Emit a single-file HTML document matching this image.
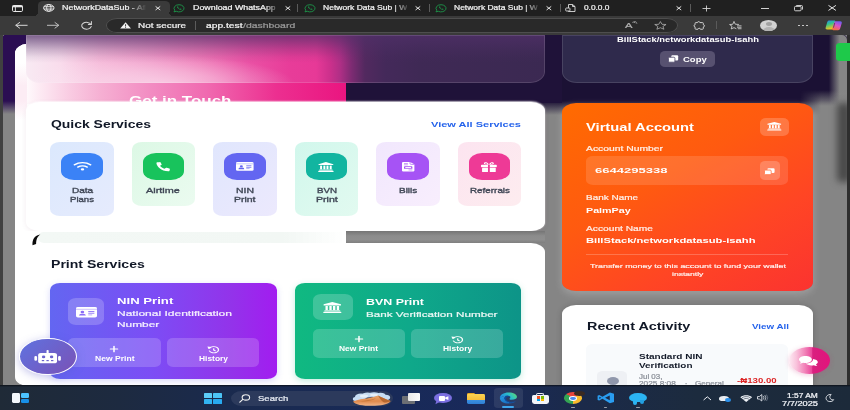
<!DOCTYPE html>
<html lang="en"><head><meta charset="utf-8"><title>NetworkDataSub - Dashboard</title>
<style>
html,body{margin:0;padding:0}
body{width:850px;height:410px;overflow:hidden;position:relative;background:#858585;font-family:"Liberation Sans", "DejaVu Sans", sans-serif;}
.b{position:absolute;box-sizing:border-box}
.t{position:absolute;white-space:nowrap;transform-origin:0 50%;margin:0}
.t.r{-webkit-text-stroke:.22px currentColor}
svg{position:absolute;overflow:visible}
</style></head>
<body>
<div class="b " style="left:3px;top:34.5px;width:844px;height:81.5px;background:linear-gradient(to bottom,#1b1134 0,#1b1134 66px,#858585 80px);border-radius:3px 4px 0 0"></div>
<div class="b " style="left:814px;top:34.5px;width:33px;height:81.5px;background:linear-gradient(to right,rgba(133,133,133,0) 0,rgba(133,133,133,0) 45%,#858585 78%);border-radius:0 5px 0 0"></div>
<div class="b " style="left:800px;top:90px;width:47px;height:26px;background:linear-gradient(to bottom,rgba(133,133,133,0) 0,#858585 62%);-webkit-mask-image:linear-gradient(to right,transparent 0,#000 45%);mask-image:linear-gradient(to right,transparent 0,#000 45%)"></div>
<div class="b " style="left:3px;top:34.5px;width:13px;height:81.5px;background:linear-gradient(to bottom,#2b0e52 0,#2b0e52 66px,#858585 79px);border-radius:3px 0 0 0"></div>
<div class="b " style="left:3px;top:34.5px;width:25px;height:17.5px;background:#2b0e52;border-radius:3px 0 0 0"></div>
<div class="b " style="left:0px;top:34px;width:3px;height:352px;background:#404040"></div>
<div class="b " style="left:847px;top:34px;width:3px;height:352px;background:#2e2e2e"></div>
<div class="b " style="left:837px;top:103px;width:14px;height:79px;background:#4a4a4a;filter:blur(3.6px);border-radius:4px"></div>
<div class="b " style="left:847px;top:34px;width:3px;height:352px;background:#2e2e2e"></div>
<div class="b " style="left:835.5px;top:42.5px;width:15.5px;height:18.5px;background:#1ec94a;border-radius:4px 0 0 4px / 3px 0 0 3px"></div>
<div class="b " style="left:15px;top:43.5px;width:330.5px;height:342.5px;background:#fff;border-radius:12px 0 0 13px / 10px 0 0 9px"></div>
<div class="b " style="left:15px;top:43.5px;width:330.5px;height:60.5px;background:linear-gradient(to right,#ffffff 0,#ffffff 2%,#fdeaf3 7.5%,#f9cbe2 16.6%,#f6b0d3 25.7%,#f28cc2 40.8%,#f06ab0 57.8%,#ec2f90 79%,#ea1580 100%);border-radius:12px 0 0 0 / 10px 0 0 0"></div>
<div class="b " style="left:15px;top:43.5px;width:12px;height:76.5px;background:linear-gradient(to bottom,#fff 0,#fff 25%,#fcecf4 55%,#fcecf4 75%,#fff 100%);border-radius:12px 0 0 0 / 10px 0 0 0"></div>
<div class="b " style="left:345.5px;top:34.5px;width:216.5px;height:68.5px;background:#1f1239"></div>
<div class="t" style="left:129px;top:94px;font-size:12.5px;line-height:15.0px;font-weight:700;color:#fff;transform:scaleX(1.3582);">Get in Touch</div>
<div class="b " style="left:26px;top:34.5px;width:519px;height:48.0px;background:linear-gradient(to bottom,rgba(80,48,104,.74) 0,rgba(80,48,104,.54) 13%,rgba(80,48,104,.28) 30%,rgba(80,48,104,.08) 46%,rgba(80,48,104,0) 58%),radial-gradient(ellipse 135px 30px at 135px 50px,rgba(255,240,248,.62) 0,rgba(255,240,248,.4) 45%,rgba(255,240,248,0) 100%),linear-gradient(to right,#f8eaf3 0.0%,#f9dcec 6.6%,#f5b8d8 14.3%,#f09ac8 23.9%,#ee78b6 33.5%,#ea50a4 43.2%,#e83c99 50.9%,#e73997 55.9%,#cc308c 58.6%,#b02f86 60.5%,#7c2b72 62.8%,#52295f 65.3%,#44295a 69.2%,#3f2955 75.9%,#3b2952 100.0%);border-radius:0 0 15px 15px / 0 0 11px 11px;box-shadow:inset 0 0 0 1px rgba(255,255,255,.13)"></div>
<div class="b " style="left:562px;top:34.5px;width:251px;height:48.0px;background:#2f2a4c;border-radius:0 0 15px 15px / 0 0 11px 11px;box-shadow:inset 0 0 0 1px rgba(255,255,255,.12)"></div>
<div class="t" style="left:616.5px;top:36px;font-size:7px;line-height:8.4px;font-weight:700;color:#fff;transform:scaleX(1.3420);">BillStack/networkdatasub-isahh</div>
<div class="b " style="left:660px;top:50.5px;width:55px;height:16.5px;background:#575170;border-radius:5px / 4px"></div>
<div class="t" style="left:683px;top:56px;font-size:7px;line-height:8.4px;font-weight:700;color:#fff;transform:scaleX(1.3543);">Copy</div>
<div class="b " style="left:26px;top:102.2px;width:519px;height:128.8px;background:#fff;border-radius:14px / 9px;box-shadow:0 -.6px 1.6px rgba(255,255,255,.75),0 1px 5px rgba(120,60,100,.10)"></div>
<div class="t" style="left:50.5px;top:119px;font-size:10px;line-height:12.0px;font-weight:700;color:#111827;transform:scaleX(1.3943);">Quick Services</div>
<div class="t" style="left:431px;top:120px;font-size:7.5px;line-height:9.0px;font-weight:700;color:#2563eb;transform:scaleX(1.4683);">View All Services</div>
<div class="b " style="left:50.0px;top:142px;width:63.5px;height:73.8px;background:linear-gradient(135deg,#dbe8fd,#e6ebfd);border-radius:10px / 7px"></div>
<div class="b " style="left:61.0px;top:153px;width:41.5px;height:26.5px;background:#3b82f6;border-radius:13px / 9px"></div>
<div class="t r" style="left:71.6px;top:187px;font-size:7.4px;line-height:8.88px;font-weight:400;color:#3f4655;transform:scaleX(1.3568);-webkit-text-stroke:.32px #3f4655;">Data</div>
<div class="t r" style="left:70.3px;top:196px;font-size:7.4px;line-height:8.88px;font-weight:400;color:#3f4655;transform:scaleX(1.2973);-webkit-text-stroke:.32px #3f4655;">Plans</div>
<div class="b " style="left:131.5px;top:142px;width:63.5px;height:64px;background:linear-gradient(135deg,#dcf8e5,#ebfbf0);border-radius:10px / 7px"></div>
<div class="b " style="left:142.5px;top:153px;width:41.5px;height:26.5px;background:#18c35c;border-radius:13px / 9px"></div>
<div class="t r" style="left:146.4px;top:187px;font-size:7.4px;line-height:8.88px;font-weight:400;color:#3f4655;transform:scaleX(1.4739);-webkit-text-stroke:.32px #3f4655;">Airtime</div>
<div class="b " style="left:213.0px;top:142px;width:63.5px;height:73.8px;background:linear-gradient(135deg,#e0e6fd,#ece9fd);border-radius:10px / 7px"></div>
<div class="b " style="left:224.0px;top:153px;width:41.5px;height:26.5px;background:#6366f1;border-radius:13px / 9px"></div>
<div class="t r" style="left:235.7px;top:187px;font-size:7.4px;line-height:8.88px;font-weight:400;color:#3f4655;transform:scaleX(1.4135);-webkit-text-stroke:.32px #3f4655;">NIN</div>
<div class="t r" style="left:234px;top:196px;font-size:7.4px;line-height:8.88px;font-weight:400;color:#3f4655;transform:scaleX(1.4142);-webkit-text-stroke:.32px #3f4655;">Print</div>
<div class="b " style="left:294.5px;top:142px;width:63.5px;height:73.8px;background:linear-gradient(135deg,#d1f7ec,#e2faf0);border-radius:10px / 7px"></div>
<div class="b " style="left:305.5px;top:153px;width:41.5px;height:26.5px;background:#12b5a0;border-radius:13px / 9px"></div>
<div class="t r" style="left:316.7px;top:187px;font-size:7.4px;line-height:8.88px;font-weight:400;color:#3f4655;transform:scaleX(1.3155);-webkit-text-stroke:.32px #3f4655;">BVN</div>
<div class="t r" style="left:315.7px;top:196px;font-size:7.4px;line-height:8.88px;font-weight:400;color:#3f4655;transform:scaleX(1.4339);-webkit-text-stroke:.32px #3f4655;">Print</div>
<div class="b " style="left:376.0px;top:142px;width:63.5px;height:64px;background:linear-gradient(135deg,#f1e7fd,#f8eefd);border-radius:10px / 7px"></div>
<div class="b " style="left:387.0px;top:153px;width:41.5px;height:26.5px;background:#a653f5;border-radius:13px / 9px"></div>
<div class="t r" style="left:398.7px;top:187px;font-size:7.4px;line-height:8.88px;font-weight:400;color:#3f4655;transform:scaleX(1.3493);-webkit-text-stroke:.32px #3f4655;">Bills</div>
<div class="b " style="left:457.5px;top:142px;width:63.5px;height:64px;background:linear-gradient(135deg,#fce4f0,#fdecef);border-radius:10px / 7px"></div>
<div class="b " style="left:468.5px;top:153px;width:41.5px;height:26.5px;background:#ee3a96;border-radius:13px / 9px"></div>
<div class="t r" style="left:469.5px;top:187px;font-size:7.4px;line-height:8.88px;font-weight:400;color:#3f4655;transform:scaleX(1.3340);-webkit-text-stroke:.32px #3f4655;">Referrals</div>
<div class="b " style="left:26px;top:231px;width:319.5px;height:11.5px;background:#fff"></div>
<div class="b " style="left:345.5px;top:231px;width:199.5px;height:11.5px;background:linear-gradient(to bottom,#757575 0,#8c8c8c 40%,#8e8e8e 72%,#7f7f7f 100%)"></div>
<div class="b " style="left:26px;top:242.5px;width:519px;height:143.5px;background:#fff;border-radius:14px 14px 0 0 / 9px 9px 0 0"></div>
<div class="b " style="left:38px;top:231.5px;width:307px;height:11.1px;background:linear-gradient(to right,#f3f8f5 0,#f2f7f4 80%,rgba(255,255,255,0) 100%);border-radius:6px 0 0 6px / 5px 0 0 5px;filter:blur(.6px)"></div>
<svg style="left:31.6px;top:233.6px" width="9" height="12" viewBox="0 0 9 12"><path d="M.5 11.2 C.2 5.4 2.4 1.6 8.4 .5 C5.2 2.6 4.3 5.4 4.1 10 Z" fill="#0b0b0b"/></svg>
<div class="t" style="left:50.7px;top:259px;font-size:10px;line-height:12.0px;font-weight:700;color:#111827;transform:scaleX(1.4059);">Print Services</div>
<div class="b " style="left:50px;top:282.5px;width:227px;height:96.0px;background:linear-gradient(to right,#6366f1 0,#7c4df5 45%,#9333ea 80%,#a21cf0 100%);border-radius:10px / 7px;box-shadow:0 2px 6px rgba(99,102,241,.25)"></div>
<div class="b " style="left:68px;top:298px;width:36px;height:27px;background:rgba(255,255,255,.2);border-radius:8px / 6px"></div>
<div class="t" style="left:116.7px;top:296px;font-size:9px;line-height:10.8px;font-weight:700;color:#fff;transform:scaleX(1.4617);">NIN Print</div>
<div class="t r" style="left:116.5px;top:309px;font-size:8px;line-height:9.6px;font-weight:400;color:rgba(255,255,255,.88);transform:scaleX(1.5033);">National Identification</div>
<div class="t r" style="left:116.7px;top:320px;font-size:8px;line-height:9.6px;font-weight:400;color:rgba(255,255,255,.88);transform:scaleX(1.4867);">Number</div>
<div class="b " style="left:68px;top:337.5px;width:93px;height:29.5px;background:rgba(255,255,255,.18);border-radius:6px / 5px"></div>
<div class="b " style="left:167px;top:337.5px;width:92px;height:29.5px;background:rgba(255,255,255,.18);border-radius:6px / 5px"></div>
<div class="t" style="left:94.5px;top:355px;font-size:6.5px;line-height:7.8px;font-weight:700;color:#fff;transform:scaleX(1.3174);">New Print</div>
<div class="t" style="left:198.5px;top:355px;font-size:6.5px;line-height:7.8px;font-weight:700;color:#fff;transform:scaleX(1.2943);">History</div>
<div class="b " style="left:295px;top:282.5px;width:226px;height:96.0px;background:linear-gradient(to right,#10b981 0,#0fa98a 50%,#0d9488 100%);border-radius:10px / 7px;box-shadow:0 2px 6px rgba(16,185,129,.25)"></div>
<div class="b " style="left:312.5px;top:294px;width:40.5px;height:26px;background:rgba(255,255,255,.2);border-radius:8px / 6px"></div>
<div class="t" style="left:366px;top:297px;font-size:9px;line-height:10.8px;font-weight:700;color:#fff;transform:scaleX(1.3804);">BVN Print</div>
<div class="t r" style="left:366px;top:310px;font-size:8px;line-height:9.6px;font-weight:400;color:rgba(255,255,255,.88);transform:scaleX(1.4568);">Bank Verification Number</div>
<div class="b " style="left:312.5px;top:329px;width:92.5px;height:29px;background:rgba(255,255,255,.18);border-radius:6px / 5px"></div>
<div class="b " style="left:411px;top:329px;width:92px;height:29px;background:rgba(255,255,255,.18);border-radius:6px / 5px"></div>
<div class="t" style="left:339px;top:345px;font-size:6.5px;line-height:7.8px;font-weight:700;color:#fff;transform:scaleX(1.3007);">New Print</div>
<div class="t" style="left:442.5px;top:345px;font-size:6.5px;line-height:7.8px;font-weight:700;color:#fff;transform:scaleX(1.3032);">History</div>
<div class="b " style="left:562px;top:102.5px;width:250.5px;height:188.5px;background:linear-gradient(150deg,#ff6b00 0,#ff5a10 40%,#ff4524 70%,#fb3330 100%);border-radius:14px / 9px;box-shadow:0 3px 9px rgba(235,235,235,.28)"></div>
<div class="t" style="left:586px;top:122px;font-size:10px;line-height:12.0px;font-weight:700;color:#fff;transform:scaleX(1.4722);">Virtual Account</div>
<div class="b " style="left:759.5px;top:118px;width:29.0px;height:18px;background:rgba(255,255,255,.2);border-radius:6px / 5px"></div>
<div class="t r" style="left:586px;top:145px;font-size:7px;line-height:8.4px;font-weight:400;color:rgba(255,255,255,.85);transform:scaleX(1.4768);">Account Number</div>
<div class="b " style="left:586px;top:156px;width:202px;height:29px;background:rgba(255,255,255,.13);border-radius:7px / 5px"></div>
<div class="t" style="left:595px;top:166px;font-size:8px;line-height:9.6px;font-weight:700;color:#fff;transform:scaleX(1.6292);">6644295338</div>
<div class="b " style="left:759.5px;top:161px;width:20.5px;height:19px;background:rgba(255,255,255,.2);border-radius:5px / 4px"></div>
<div class="t r" style="left:586px;top:194px;font-size:7px;line-height:8.4px;font-weight:400;color:rgba(255,255,255,.85);transform:scaleX(1.4216);">Bank Name</div>
<div class="t" style="left:586px;top:206px;font-size:7.5px;line-height:9.0px;font-weight:700;color:#fff;transform:scaleX(1.4290);">PalmPay</div>
<div class="t r" style="left:586px;top:225px;font-size:7px;line-height:8.4px;font-weight:400;color:rgba(255,255,255,.85);transform:scaleX(1.4590);">Account Name</div>
<div class="t" style="left:586px;top:236px;font-size:7.5px;line-height:9.0px;font-weight:700;color:#fff;transform:scaleX(1.4950);">BillStack/networkdatasub-isahh</div>
<div class="b " style="left:586px;top:254px;width:202px;height:1px;background:rgba(255,255,255,.22)"></div>
<div class="t r" style="left:590px;top:263px;font-size:6px;line-height:7.2px;font-weight:400;color:rgba(255,255,255,.85);transform:scaleX(1.4791);">Transfer money to this account to fund your wallet</div>
<div class="t r" style="left:671.7px;top:271px;font-size:6px;line-height:7.2px;font-weight:400;color:rgba(255,255,255,.85);transform:scaleX(1.4217);">instantly</div>
<div class="b " style="left:562px;top:304.5px;width:250.5px;height:81.5px;background:#fff;border-radius:14px 14px 0 0 / 9px 9px 0 0;box-shadow:0 1px 6px rgba(0,0,0,.2)"></div>
<div class="t" style="left:586.7px;top:321px;font-size:10px;line-height:12.0px;font-weight:700;color:#111827;transform:scaleX(1.4372);">Recent Activity</div>
<div class="t" style="left:751.5px;top:322px;font-size:7.5px;line-height:9.0px;font-weight:700;color:#2563eb;transform:scaleX(1.3047);">View All</div>
<div class="b " style="left:586px;top:344px;width:202px;height:42px;background:#f8fafc;border-radius:7px 7px 0 0 / 5px 5px 0 0"></div>
<div class="t" style="left:639px;top:352px;font-size:7.5px;line-height:9.0px;font-weight:700;color:#111827;transform:scaleX(1.3364);">Standard NIN</div>
<div class="t" style="left:639px;top:361px;font-size:7.5px;line-height:9.0px;font-weight:700;color:#111827;transform:scaleX(1.3230);">Verification</div>
<div class="t r" style="left:639.4px;top:373px;font-size:7px;line-height:8.4px;font-weight:400;color:#8a8f98;transform:scaleX(1.1345);">Jul 03,</div>
<div class="t r" style="left:639.4px;top:380px;font-size:7px;line-height:8.4px;font-weight:400;color:#8a8f98;transform:scaleX(1.1811);">2025 8:08</div>
<div class="t" style="left:685px;top:380px;font-size:7px;line-height:8.4px;font-weight:700;color:#8a8f98;transform:scaleX(1.1093);">·</div>
<div class="t r" style="left:695px;top:380px;font-size:7px;line-height:8.4px;font-weight:400;color:#8a8f98;transform:scaleX(1.1563);">General</div>
<div class="t" style="left:737.3px;top:376px;font-size:7.5px;line-height:9.0px;font-weight:700;color:#dc2626;transform:scaleX(1.2865);">-₦130.00</div>
<div class="b " style="left:597px;top:371px;width:30px;height:15px;background:#eef0f4;border-radius:6px 6px 0 0 / 4px 4px 0 0"></div>
<div class="b " style="left:606.5px;top:376.5px;width:12.0px;height:8.0px;background:#9097ab;border-radius:50%"></div>
<div class="b " style="left:19px;top:337.6px;width:58px;height:37.8px;background:linear-gradient(135deg,#5f72e0 0,#7a52b6 100%);border-radius:50%;border:1.9px solid #fff;box-shadow:0 2px 8px rgba(90,90,200,.35)"></div>
<div class="b " style="left:789px;top:347px;width:41px;height:27px;background:linear-gradient(to right,#fdeaf3 0,#f9c3dc 18%,#f285ba 38%,#ea4a9c 55%,#d9207f 58%,#dc1a7d 75%,#e3147c 100%);border-radius:50%;box-shadow:0 1px 5px rgba(200,40,120,.25)"></div>
<svg style="left:72.7px;top:161.4px" width="19" height="9.6" viewBox="0 0 24 18" preserveAspectRatio="none"><g fill="none" stroke="#fff" stroke-linecap="round" stroke-width="2.6"><path d="M2 7 A14.5 14.5 0 0 1 22 7"/><path d="M6.3 11.4 A8.6 8.6 0 0 1 17.7 11.4"/></g><circle cx="12" cy="15.6" r="2.2" fill="#fff"/></svg>
<svg style="left:155.4px;top:161.3px" width="15.8" height="10.8" viewBox="0 0 22 22" preserveAspectRatio="none"><path fill="#fff" d="M5.2 0.6 L8.4 0.1 C9 0 9.5 0.3 9.8 0.9 L11.2 4.3 C11.4 4.9 11.3 5.5 10.8 5.9 L9 7.4 C10.3 10.2 12.6 12.5 15.4 13.8 L16.9 12 C17.3 11.5 17.9 11.4 18.5 11.6 L21.9 13 C22.5 13.3 22.8 13.8 22.7 14.4 L22.2 17.6 C22.1 18.3 21.5 18.8 20.8 18.8 C10.4 18.8 4 8.4 4 2 C4 1.3 4.5 0.7 5.2 0.6 Z" transform="translate(-2,2.2)"/></svg>
<svg style="left:235.8px;top:162.0px" width="17.6" height="8.8" viewBox="0 0 24 18" preserveAspectRatio="none"><rect x="0" y="0" width="24" height="18" rx="2.2" fill="#fff"/><rect x="0" y="3.2" width="24" height="1.3" fill="#6366f1" opacity=".55"/><circle cx="7.3" cy="8.6" r="2.1" fill="#6366f1"/><path d="M3.4 14.6 C3.4 12.4 5 11.5 7.3 11.5 C9.6 11.5 11.2 12.4 11.2 14.6 Z" fill="#6366f1"/><rect x="14" y="7" width="7" height="1.5" fill="#6366f1"/><rect x="14" y="10" width="7" height="1.5" fill="#6366f1"/><rect x="14" y="13" width="4.5" height="1.4" fill="#6366f1" opacity=".7"/></svg>
<svg style="left:318.4px;top:161.5px" width="15.8" height="10" viewBox="0 0 24 21.5" preserveAspectRatio="none"><g fill="#fff"><path d="M12 0 L23.2 4.6 L23.2 6.6 L0.8 6.6 L0.8 4.6 Z"/><rect x="3.2" y="7.8" width="3" height="8"/><rect x="8.2" y="7.8" width="3" height="8"/><rect x="12.9" y="7.8" width="3" height="8"/><rect x="17.8" y="7.8" width="3" height="8"/><rect x="1.8" y="16.4" width="20.4" height="2"/><rect x="0.4" y="19" width="23.2" height="2.4" rx=".6"/></g></svg>
<svg style="left:401.8px;top:161.5px" width="12.4" height="9.6" viewBox="0 0 16 22" preserveAspectRatio="none"><path fill="#fff" d="M2 0 H10.4 L16 5.4 V20 C16 21.1 15.1 22 14 22 H2 C0.9 22 0 21.1 0 20 V2 C0 .9 .9 0 2 0 Z"/><path d="M10.4 0 V4 C10.4 4.8 11 5.4 11.8 5.4 H16" fill="none" stroke="#a653f5" stroke-width="1.2"/><rect x="2.6" y="3" width="5" height="1.3" fill="#a653f5"/><rect x="2.6" y="6" width="5" height="1.3" fill="#a653f5"/><rect x="2.6" y="10" width="10.8" height="5.6" rx=".8" fill="#a653f5"/><rect x="4.2" y="11.6" width="7.6" height="2.4" fill="#fff"/><rect x="8.4" y="17.6" width="5" height="1.3" fill="#a653f5"/></svg>
<svg style="left:480.9px;top:161.5px" width="15.8" height="10" viewBox="0 0 24 22" preserveAspectRatio="none"><g fill="#fff"><rect x="0" y="6" width="24" height="5.4" rx="1"/><rect x="1.6" y="12.6" width="20.8" height="9.4" rx="1.2"/><path d="M12 6 C9 6 4.4 5.8 4.4 2.9 C4.4 .4 7.2 -.4 9 1 C10.6 2.2 11.4 4.2 12 6 Z M12 6 C15 6 19.6 5.8 19.6 2.9 C19.6 .4 16.8 -.4 15 1 C13.4 2.2 12.6 4.2 12 6 Z"/></g><rect x="10.6" y="6" width="2.8" height="16" fill="#ee3a96"/><circle cx="7.6" cy="3.4" r="1.1" fill="#ee3a96"/><circle cx="16.4" cy="3.4" r="1.1" fill="#ee3a96"/></svg>
<svg style="left:76.0px;top:306.6px" width="21" height="10.4" viewBox="0 0 24 18" preserveAspectRatio="none"><rect x="0" y="0" width="24" height="18" rx="2.2" fill="#fff"/><rect x="0" y="3.2" width="24" height="1.3" fill="#8a6cf6" opacity=".55"/><circle cx="7.3" cy="8.6" r="2.1" fill="#8a6cf6"/><path d="M3.4 14.6 C3.4 12.4 5 11.5 7.3 11.5 C9.6 11.5 11.2 12.4 11.2 14.6 Z" fill="#8a6cf6"/><rect x="14" y="7" width="7" height="1.5" fill="#8a6cf6"/><rect x="14" y="10" width="7" height="1.5" fill="#8a6cf6"/><rect x="14" y="13" width="4.5" height="1.4" fill="#8a6cf6" opacity=".7"/></svg>
<svg style="left:110.4px;top:346.4px" width="8" height="6" viewBox="0 0 10 10" preserveAspectRatio="none"><path d="M5 0.6 V9.4 M0.6 5 H9.4" stroke="#fff" stroke-width="1.9" stroke-linecap="round" fill="none"/></svg>
<svg style="left:206.8px;top:345.5px" width="12.4" height="7.8" viewBox="0 0 22 21" preserveAspectRatio="none"><g fill="none" stroke="#fff" stroke-width="2.3" stroke-linecap="round" stroke-linejoin="round"><path d="M4.6 6.2 A8.4 8.4 0 1 1 4.2 13.2"/><path d="M12 7 V11.4 L14.8 13.2"/></g><path d="M0.8 1.6 L7.6 2.4 L2.4 8.2 Z" fill="#fff"/></svg>
<svg style="left:323.4px;top:301.5px" width="18.6" height="11" viewBox="0 0 24 21.5" preserveAspectRatio="none"><g fill="#fff"><path d="M12 0 L23.2 4.6 L23.2 6.6 L0.8 6.6 L0.8 4.6 Z"/><rect x="3.2" y="7.8" width="3" height="8"/><rect x="8.2" y="7.8" width="3" height="8"/><rect x="12.9" y="7.8" width="3" height="8"/><rect x="17.8" y="7.8" width="3" height="8"/><rect x="1.8" y="16.4" width="20.4" height="2"/><rect x="0.4" y="19" width="23.2" height="2.4" rx=".6"/></g></svg>
<svg style="left:354.6px;top:336.4px" width="8" height="6" viewBox="0 0 10 10" preserveAspectRatio="none"><path d="M5 0.6 V9.4 M0.6 5 H9.4" stroke="#fff" stroke-width="1.9" stroke-linecap="round" fill="none"/></svg>
<svg style="left:450.8px;top:335.5px" width="12.4" height="7.8" viewBox="0 0 22 21" preserveAspectRatio="none"><g fill="none" stroke="#fff" stroke-width="2.3" stroke-linecap="round" stroke-linejoin="round"><path d="M4.6 6.2 A8.4 8.4 0 1 1 4.2 13.2"/><path d="M12 7 V11.4 L14.8 13.2"/></g><path d="M0.8 1.6 L7.6 2.4 L2.4 8.2 Z" fill="#fff"/></svg>
<svg style="left:766.7px;top:122.0px" width="14.6" height="8.6" viewBox="0 0 24 21.5" preserveAspectRatio="none"><g fill="#fff"><path d="M12 0 L23.2 4.6 L23.2 6.6 L0.8 6.6 L0.8 4.6 Z"/><rect x="3.2" y="7.8" width="3" height="8"/><rect x="8.2" y="7.8" width="3" height="8"/><rect x="12.9" y="7.8" width="3" height="8"/><rect x="17.8" y="7.8" width="3" height="8"/><rect x="1.8" y="16.4" width="20.4" height="2"/><rect x="0.4" y="19" width="23.2" height="2.4" rx=".6"/></g></svg>
<svg style="left:764.4px;top:167.5px" width="10.8" height="7" viewBox="0 0 20 15" preserveAspectRatio="none"><rect x="6.4" y="0.4" width="13.2" height="10.4" rx="2" fill="#fff"/><rect x="0.9" y="4.4" width="12.4" height="9.8" rx="2" fill="#fff" stroke="#ff7a4d" stroke-width="1.7"/></svg>
<svg style="left:33.9px;top:349.5px" width="27.2" height="13.6" viewBox="0 0 30 19.6" preserveAspectRatio="none"><g fill="#fff"><rect x="4.6" y="4.4" width="20.8" height="14.8" rx="3"/><rect x="13.8" y="0" width="2.4" height="5" rx="1"/><rect x="0.4" y="8.6" width="3" height="7" rx="1.4"/><rect x="26.6" y="8.6" width="3" height="7" rx="1.4"/></g><circle cx="10.6" cy="10" r="1.9" fill="#6b63cd"/><circle cx="19.4" cy="10" r="1.9" fill="#6b63cd"/><rect x="8.6" y="14.4" width="2.6" height="1.7" fill="#6b63cd"/><rect x="13.7" y="14.4" width="2.6" height="1.7" fill="#6b63cd"/><rect x="18.8" y="14.4" width="2.6" height="1.7" fill="#6b63cd"/></svg>
<svg style="left:799.3px;top:355.6px" width="18.8" height="10" viewBox="0 0 28 21" preserveAspectRatio="none"><g fill="#fff"><path d="M9.6 0 C14.9 0 19.2 3.3 19.2 7.4 C19.2 11.5 14.9 14.8 9.6 14.8 C8.3 14.8 7.1 14.6 6 14.3 C4.8 15.2 3 16 0.8 16 C2 14.8 2.6 13.6 2.8 12.6 C1.1 11.2 0 9.4 0 7.4 C0 3.3 4.3 0 9.6 0 Z"/><path d="M20.9 6.2 C25 6.8 28 9.5 28 12.7 C28 14.6 27 16.3 25.300000000000001 17.6 C25.5 18.6 26.1 19.8 27.3 21 C25.1 21 23.3 20.2 22.1 19.3 C21 19.6 19.800000000000001 19.8 18.5 19.8 C14.8 19.8 11.6 18.2 10 15.9 C15.9 15.8 20.9 12.3 20.9 7.4 C20.9 7 20.9 6.6 20.9 6.2 Z"/></g></svg>
<svg style="left:667.8px;top:55.0px" width="10.4" height="7.6" viewBox="0 0 20 15" preserveAspectRatio="none"><rect x="6.4" y="0.4" width="13.2" height="10.4" rx="2" fill="#fff"/><rect x="0.9" y="4.4" width="12.4" height="9.8" rx="2" fill="#fff" stroke="#575170" stroke-width="1.7"/></svg>
<div class="b " style="left:0px;top:0px;width:850px;height:16.2px;background:#202020"></div>
<div class="b " style="left:0px;top:16px;width:850px;height:18.5px;background:#3a3a3a"></div>
<div class="b " style="left:37.5px;top:1.2px;width:132.0px;height:15.8px;background:#3a3a3a;border-radius:5px 5px 0 0 / 4px 4px 0 0"></div>
<div class="b " style="left:33.5px;top:12px;width:4.1px;height:4.2px;background:radial-gradient(circle at 0 0,#202020 0,#202020 4px,#3a3a3a 4.2px)"></div>
<div class="b " style="left:169.4px;top:12px;width:4.1px;height:4.2px;background:radial-gradient(circle at 100% 0,#202020 0,#202020 4px,#3a3a3a 4.2px)"></div>
<svg style="left:12px;top:4.6px" width="11" height="7" viewBox="0 0 11 7"><rect x=".5" y=".5" width="10" height="6" rx="1.2" fill="none" stroke="#e8e8e8" stroke-width="1"/><rect x=".5" y=".5" width="10" height="1.8" fill="#e8e8e8"/><path d="M3.4 2 V6.4" stroke="#e8e8e8" stroke-width=".9"/></svg>
<svg style="left:43px;top:4.2px" width="11.6" height="7.8" viewBox="0 0 24 16" preserveAspectRatio="none"><g fill="none" stroke="#ededed" stroke-width="1.9"><ellipse cx="12" cy="8" rx="10.8" ry="7"/><ellipse cx="12" cy="8" rx="4.6" ry="7"/><path d="M1.6 5.6 H22.4 M1.6 10.4 H22.4"/></g></svg>
<div class="t r" style="left:62.3px;top:4px;font-size:7px;line-height:8.4px;font-weight:400;color:#f2f2f2;transform:scaleX(1.2731);-webkit-mask-image:linear-gradient(to right,#000 78%,transparent 99%);mask-image:linear-gradient(to right,#000 78%,transparent 99%);">NetworkDataSub - Afi</div>
<svg style="left:154.5px;top:5.9px" width="5.8" height="4.4" viewBox="0 0 6 4.4" preserveAspectRatio="none"><path d="M.6 .4 L5.4 4 M5.4 .4 L.6 4" stroke="#e6e6e6" stroke-width="1" fill="none"/></svg>
<svg style="left:173px;top:3.6px" width="12" height="8.6" viewBox="0 0 24 24" preserveAspectRatio="none"><path d="M12 2 A10 10 0 1 1 6.6 20.4 L2 22 L3.6 17.4 A10 10 0 0 1 12 2 Z" fill="none" stroke="#1c9a4b" stroke-width="2"/><path d="M8.4 7.2 C7.6 8.6 8.4 11.2 10.6 13.4 C12.8 15.6 15.4 16.4 16.8 15.6 L17.2 14 L14.8 12.8 L13.8 13.8 C12.6 13.4 10.6 11.4 10.2 10.2 L11.2 9.200000000000001 L10 6.8 Z" fill="#1c9a4b"/></svg>
<div class="t r" style="left:192.5px;top:4px;font-size:7px;line-height:8.4px;font-weight:400;color:#f2f2f2;transform:scaleX(1.2665);-webkit-mask-image:linear-gradient(to right,#000 86%,rgba(0,0,0,.35) 100%);mask-image:linear-gradient(to right,#000 86%,rgba(0,0,0,.35) 100%);">Download WhatsApp</div>
<svg style="left:284.90000000000003px;top:5.9px" width="5.8" height="4.4" viewBox="0 0 6 4.4" preserveAspectRatio="none"><path d="M.6 .4 L5.4 4 M5.4 .4 L.6 4" stroke="#e6e6e6" stroke-width="1" fill="none"/></svg>
<div class="b " style="left:297.20000000000005px;top:4px;width:0.9px;height:8.4px;background:#5a5a5a"></div>
<svg style="left:303.6px;top:3.6px" width="12" height="8.6" viewBox="0 0 24 24" preserveAspectRatio="none"><path d="M12 2 A10 10 0 1 1 6.6 20.4 L2 22 L3.6 17.4 A10 10 0 0 1 12 2 Z" fill="none" stroke="#1c9a4b" stroke-width="2"/><path d="M8.4 7.2 C7.6 8.6 8.4 11.2 10.6 13.4 C12.8 15.6 15.4 16.4 16.8 15.6 L17.2 14 L14.8 12.8 L13.8 13.8 C12.6 13.4 10.6 11.4 10.2 10.2 L11.2 9.200000000000001 L10 6.8 Z" fill="#1c9a4b"/></svg>
<div class="t r" style="left:323.4px;top:4px;font-size:7px;line-height:8.4px;font-weight:400;color:#f2f2f2;transform:scaleX(1.2181);-webkit-mask-image:linear-gradient(to right,#000 84%,rgba(0,0,0,.2) 100%);mask-image:linear-gradient(to right,#000 84%,rgba(0,0,0,.2) 100%);">Network Data Sub | W</div>
<svg style="left:415.1px;top:5.9px" width="5.8" height="4.4" viewBox="0 0 6 4.4" preserveAspectRatio="none"><path d="M.6 .4 L5.4 4 M5.4 .4 L.6 4" stroke="#e6e6e6" stroke-width="1" fill="none"/></svg>
<div class="b " style="left:428.90000000000003px;top:4px;width:0.9px;height:8.4px;background:#5a5a5a"></div>
<svg style="left:434.6px;top:3.6px" width="12" height="8.6" viewBox="0 0 24 24" preserveAspectRatio="none"><path d="M12 2 A10 10 0 1 1 6.6 20.4 L2 22 L3.6 17.4 A10 10 0 0 1 12 2 Z" fill="none" stroke="#1c9a4b" stroke-width="2"/><path d="M8.4 7.2 C7.6 8.6 8.4 11.2 10.6 13.4 C12.8 15.6 15.4 16.4 16.8 15.6 L17.2 14 L14.8 12.8 L13.8 13.8 C12.6 13.4 10.6 11.4 10.2 10.2 L11.2 9.200000000000001 L10 6.8 Z" fill="#1c9a4b"/></svg>
<div class="t r" style="left:454px;top:4px;font-size:7px;line-height:8.4px;font-weight:400;color:#f2f2f2;transform:scaleX(1.2123);-webkit-mask-image:linear-gradient(to right,#000 84%,rgba(0,0,0,.2) 100%);mask-image:linear-gradient(to right,#000 84%,rgba(0,0,0,.2) 100%);">Network Data Sub | W</div>
<svg style="left:546.1px;top:5.9px" width="5.8" height="4.4" viewBox="0 0 6 4.4" preserveAspectRatio="none"><path d="M.6 .4 L5.4 4 M5.4 .4 L.6 4" stroke="#e6e6e6" stroke-width="1" fill="none"/></svg>
<div class="b " style="left:559.6px;top:4px;width:0.9px;height:8.4px;background:#5a5a5a"></div>
<svg style="left:565px;top:4px" width="11" height="8" viewBox="0 0 22 16" preserveAspectRatio="none"><g fill="none" stroke="#dcdcdc" stroke-width="1.8"><path d="M7 1 H15 L20 5 V15 H7 Z"/><path d="M15 1 V5 H20"/><rect x="1.4" y="8" width="8.6" height="6" rx="1.6" fill="#202020"/></g></svg>
<div class="t r" style="left:584px;top:4px;font-size:7px;line-height:8.4px;font-weight:400;color:#f2f2f2;transform:scaleX(1.1857);">0.0.0.0</div>
<svg style="left:676.1px;top:5.9px" width="5.8" height="4.4" viewBox="0 0 6 4.4" preserveAspectRatio="none"><path d="M.6 .4 L5.4 4 M5.4 .4 L.6 4" stroke="#e6e6e6" stroke-width="1" fill="none"/></svg>
<div class="b " style="left:689.6px;top:4px;width:0.9px;height:8.4px;background:#5a5a5a"></div>
<svg style="left:701.5px;top:4.6px" width="9" height="7" viewBox="0 0 9 7" preserveAspectRatio="none"><path d="M4.5 .5 V6.5 M.5 3.5 H8.5" stroke="#dcdcdc" stroke-width=".85" fill="none"/></svg>
<div class="b " style="left:761.4px;top:7.7px;width:7.6px;height:0.7px;background:#d0d0d0"></div>
<svg style="left:793.6px;top:4.8px" width="9" height="6.4" viewBox="0 0 9 6.4"><rect x=".5" y="1.4" width="6.6" height="4.4" rx="1" fill="none" stroke="#e0e0e0" stroke-width=".9"/><path d="M2.2 .5 H7.4 Q8.5 .5 8.5 1.6 V4.6" fill="none" stroke="#e0e0e0" stroke-width=".9"/></svg>
<svg style="left:828px;top:5.2px" width="8.4" height="5.8" viewBox="0 0 8.4 5.8" preserveAspectRatio="none"><path d="M.5 .4 L7.9 5.4 M7.9 .4 L.5 5.4" stroke="#e6e6e6" stroke-width="1" fill="none"/></svg>
<svg style="left:14.6px;top:22.4px" width="12.6" height="6.6" viewBox="0 0 12.6 6.6"><path d="M12.2 3.3 H1 M4.6 .5 L.8 3.3 L4.6 6.1" fill="none" stroke="#d8d8d8" stroke-width="1" stroke-linecap="round" stroke-linejoin="round"/></svg>
<svg style="left:47px;top:22.4px" width="12.6" height="6.6" viewBox="0 0 12.6 6.6"><path d="M.4 3.3 H11.6 M8 .5 L11.8 3.3 L8 6.1" fill="none" stroke="#bdbdbd" stroke-width="1" stroke-linecap="round" stroke-linejoin="round"/></svg>
<svg style="left:79.6px;top:21.4px" width="12.6" height="8.6" viewBox="0 0 25 17" preserveAspectRatio="none"><path d="M21.6 6.4 A9.6 6.8 0 1 0 22.4 10.8" fill="none" stroke="#d8d8d8" stroke-width="2" stroke-linecap="round"/><path d="M22.6 1.2 V6.8 H16.6" fill="none" stroke="#d8d8d8" stroke-width="2" stroke-linecap="round" stroke-linejoin="round"/></svg>
<div class="b " style="left:106px;top:18.2px;width:572.4px;height:14.6px;background:#292929;border-radius:11px / 7.3px;box-shadow:inset 0 0 0 1px #4e4e4e"></div>
<svg style="left:120px;top:22.3px" width="11.2" height="6.6" viewBox="0 0 22 13" preserveAspectRatio="none"><path d="M11 .4 L21.6 12.6 H.4 Z" fill="#f2f2f2"/><rect x="10.1" y="4.4" width="1.8" height="4.4" fill="#292929"/><rect x="10.1" y="9.8" width="1.8" height="1.5" fill="#292929"/></svg>
<div class="t r" style="left:138px;top:22px;font-size:7.4px;line-height:8.88px;font-weight:400;color:#f0f0f0;transform:scaleX(1.3427);">Not secure</div>
<div class="b " style="left:195px;top:21.2px;width:0.8px;height:8.4px;background:#5c5c5c"></div>
<div class="t r" style="left:205.9px;top:22px;font-size:7.4px;line-height:8.88px;font-weight:400;color:#f4f4f4;transform:scaleX(1.3880);">app.test</div>
<div class="t r" style="left:242.6px;top:22px;font-size:7.4px;line-height:8.88px;font-weight:400;color:#9a9a9a;transform:scaleX(1.4114);">/dashboard</div>
<div class="t r" style="left:625px;top:21px;font-size:7.6px;line-height:9.12px;font-weight:400;color:#b4b4b4;transform:scaleX(1.4769);">A</div>
<svg style="left:631.6px;top:21.4px" width="5.4" height="4" viewBox="0 0 5.4 4"><path d="M.6 1.2 Q2.2 .2 3 1.8 M2.2 .5 Q4.4 -.2 4.9 2.4" fill="none" stroke="#b4b4b4" stroke-width=".7" stroke-linecap="round"/></svg>
<svg style="left:653.6px;top:21px" width="12.8" height="8.8" viewBox="0 0 24 23" preserveAspectRatio="none"><path d="M12 1.5 L15 8.6 L22.6 9.2 L16.8 14.2 L18.6 21.6 L12 17.6 L5.4 21.6 L7.2 14.2 L1.4 9.2 L9 8.6 Z" fill="none" stroke="#b0b0b0" stroke-width="1.7" stroke-linejoin="round"/></svg>
<svg style="left:692.6px;top:20.8px" width="12.4" height="9.4" viewBox="0 0 24 20" preserveAspectRatio="none"><path d="M8.6 3.4 C8.6 .6 13.4 .6 13.4 3.4 H18.4 Q20 3.4 20 5 V8 C23 8 23 12.6 20 12.6 V16 Q20 17.6 18.4 17.6 H14.4 C14.4 14.8 9.6 14.8 9.6 17.6 H5.6 Q4 17.6 4 16 V12.4 C1.2 12.4 1.2 8 4 8 V5 Q4 3.4 5.6 3.4 Z" fill="none" stroke="#d6d6d6" stroke-width="1.9" stroke-linejoin="round"/></svg>
<div class="b " style="left:715.6px;top:21.4px;width:0.8px;height:8.0px;background:#5a5a5a"></div>
<svg style="left:728.6px;top:21px" width="13" height="8.8" viewBox="0 0 26 23" preserveAspectRatio="none"><path d="M10 2 L12.6 8.4 L19 9 M10 2 L7.4 8.6 L1.2 9.2 L6 13.8 L4.4 20.8 L10 17.4 L14 19.8" fill="none" stroke="#d6d6d6" stroke-width="1.9" stroke-linejoin="round" stroke-linecap="round"/><path d="M16 12.6 H25 M16 16.4 H25 M17.6 20.2 H25" stroke="#d6d6d6" stroke-width="1.8" fill="none"/></svg>
<div class="b " style="left:760.4px;top:20px;width:17.0px;height:10.8px;background:#d2d2d2;border-radius:50%;overflow:hidden"><div class="b" style="left:5.4px;top:1.9px;width:6.2px;height:3.9px;border-radius:50%;background:#a2a2a2"></div><div class="b" style="left:2.7px;top:6.5px;width:11.6px;height:8px;border-radius:50%;background:#b2b2b2"></div></div>
<div class="b " style="left:797.8px;top:24.9px;width:2.0px;height:1.5px;background:#e6e6e6;border-radius:50%"></div>
<div class="b " style="left:801.7px;top:24.9px;width:2.0px;height:1.5px;background:#e6e6e6;border-radius:50%"></div>
<div class="b " style="left:805.6px;top:24.9px;width:2.0px;height:1.5px;background:#e6e6e6;border-radius:50%"></div>
<svg style="left:825.2px;top:20.2px" width="17.4" height="10.6" viewBox="0 0 26 16" preserveAspectRatio="none"><defs><linearGradient id="cpa" x1="0" y1="0" x2=".3" y2="1"><stop offset="0" stop-color="#2f7df2"/><stop offset=".45" stop-color="#2fc58c"/><stop offset="1" stop-color="#f2c41e"/></linearGradient><linearGradient id="cpb" x1=".7" y1="0" x2=".3" y2="1"><stop offset="0" stop-color="#6d5cf0"/><stop offset=".5" stop-color="#e052c4"/><stop offset="1" stop-color="#f2703a"/></linearGradient></defs><path d="M6.4 .6 H13.6 C15 .6 15.6 1.4 15.2 2.6 L12.4 12.4 C12 13.6 11 14.4 9.6 14.4 H3.2 C1.4 14.4 .4 13.2 1 11.4 L3.4 3 C3.8 1.6 4.9 .6 6.4 .6 Z" fill="url(#cpa)"/><path d="M16.2 1.8 H22.8 C24.6 1.8 25.6 3 25 4.800000000000001 L22.6 13 C22.2 14.4 21.1 15.4 19.6 15.4 H12.4 C11 15.4 10.4 14.6 10.8 13.4 L13.6 3.8 C14 2.6 15 1.8 16.2 1.8 Z" fill="url(#cpb)"/><path d="M14.6 4.4 L12.6 11.6" stroke="#3a3a3a" stroke-width="1.1" fill="none"/></svg>
<div class="b " style="left:0px;top:385px;width:850px;height:25px;background:linear-gradient(to right,#1f2a37 0,#1d2a40 14%,#1a2a4e 27%,#182a58 46%,#19295a 56%,#1b2a4a 68%,#1c2b3e 82%,#1c2a3a 100%)"></div>
<div class="b " style="left:0px;top:385px;width:850px;height:2px;background:linear-gradient(to bottom,rgba(8,10,16,.8),rgba(8,10,16,0))"></div>
<div class="b " style="left:12px;top:393px;width:8.4px;height:10.4px;background:#f3f7fc;border-radius:1.4px"></div>
<div class="b " style="left:20.8px;top:393px;width:8.2px;height:5.4px;background:#4cc2ff;border-radius:1.2px"></div>
<div class="b " style="left:20.8px;top:398.8px;width:8.2px;height:4.6px;background:#1890e8;border-radius:1.2px"></div>
<div class="b " style="left:203.8px;top:392.8px;width:8.7px;height:5.5px;background:#5ccdf8;border-radius:.6px"></div>
<div class="b " style="left:213.2px;top:392.8px;width:8.7px;height:5.5px;background:#4cc4f6;border-radius:.6px"></div>
<div class="b " style="left:203.8px;top:398.8px;width:8.7px;height:5.5px;background:#32b4f2;border-radius:.6px"></div>
<div class="b " style="left:213.2px;top:398.8px;width:8.7px;height:5.5px;background:#28aaf0;border-radius:.6px"></div>
<div class="b " style="left:231px;top:390.8px;width:161.6px;height:15.4px;background:#2c3a5c;border-radius:11px / 7.7px"></div>
<svg style="left:239px;top:393.6px" width="11.6" height="8.8" viewBox="0 0 23 18" preserveAspectRatio="none"><ellipse cx="13.6" cy="7" rx="7.4" ry="5.6" fill="none" stroke="#f0f0f0" stroke-width="2.2"/><path d="M7.6 11 L1.6 16.6" stroke="#f0f0f0" stroke-width="2.4" stroke-linecap="round"/></svg>
<div class="t r" style="left:258.4px;top:395px;font-size:7.4px;line-height:8.88px;font-weight:400;color:#e8ecf4;transform:scaleX(1.2894);">Search</div>
<svg style="left:351.6px;top:391.6px" width="40" height="14" viewBox="0 0 40 14"><defs><linearGradient id="dn" x1="0" y1="0" x2="0" y2="1"><stop offset="0" stop-color="#e9a56c"/><stop offset=".55" stop-color="#e08a4c"/><stop offset="1" stop-color="#f0b488"/></linearGradient></defs><g fill="#c6dcf3"><ellipse cx="9" cy="4.6" rx="6" ry="3"/><ellipse cx="15.5" cy="3" rx="5.5" ry="2.6"/><ellipse cx="22" cy="2.6" rx="5" ry="2.4"/><ellipse cx="28.5" cy="3.4" rx="5" ry="2.6"/><ellipse cx="33.5" cy="5.4" rx="4.6" ry="2.6"/><ellipse cx="5.4" cy="7" rx="4.6" ry="2.2"/></g><g fill="#e6eff9"><ellipse cx="12" cy="4" rx="4" ry="1.5"/><ellipse cx="22" cy="3" rx="4" ry="1.3"/></g><path d="M1 9.4 C6 7.4 11 6.8 16 6.2 C20 5.6 23 4.4 26 3.6 C29 5 33 7.2 38.6 9 C37 12.4 28 13.8 20 13.8 C11 13.8 2.6 12.6 1 9.4 Z" fill="url(#dn)"/><path d="M26 3.6 C27.4 6 29 8.6 32 10.6 C34.6 10.4 37.4 10 38.6 9 C33 7.2 29 5 26 3.6 Z" fill="#b8682f"/><path d="M8 9.6 C13 8 18 8.2 24 6.2 C20 9 14 9.4 8 9.6 Z" fill="#c97a3c"/></svg>
<div class="b " style="left:402.4px;top:396px;width:12.2px;height:8.4px;background:#6c6f74;border-radius:1px"></div>
<div class="b " style="left:407.6px;top:392.8px;width:12.6px;height:8.2px;background:linear-gradient(to right,#e8e8e8,#fafafa);border-radius:1px"></div>
<div class="b " style="left:434.4px;top:393.2px;width:17.6px;height:10.0px;background:#7b6fe0;border-radius:50%"></div>
<svg style="left:434.6px;top:400.4px" width="6" height="4.4" viewBox="0 0 6 4.4"><path d="M.4 4.2 L1.6 0 L5.6 1.6 Z" fill="#7b6fe0"/></svg>
<div class="b " style="left:438.6px;top:396px;width:6.8px;height:4.6px;background:#fff;border-radius:1px"></div>
<svg style="left:445.2px;top:396.2px" width="3.6" height="4.2" viewBox="0 0 3.6 4.2"><path d="M.2 1.5 L3.4 .2 V4 L.2 2.7 Z" fill="#fff"/></svg>
<div class="b " style="left:466.6px;top:393px;width:8.4px;height:3px;background:#e9a824;border-radius:1.4px 1.4px 0 0"></div>
<div class="b " style="left:466.6px;top:394.4px;width:18.4px;height:9.2px;background:linear-gradient(to bottom,#fbd352 0,#f6bd38 62%,#3a8fe0 63%,#2f7fd4 100%);border-radius:1.4px"></div>
<div class="b " style="left:494.2px;top:388.4px;width:28.6px;height:20.0px;background:rgba(255,255,255,.085);border-radius:4px / 3px"></div>
<svg style="left:499.2px;top:392.4px" width="18.6" height="11.8" viewBox="0 0 24 24" preserveAspectRatio="none"><defs><linearGradient id="eg1" x1="0" y1=".4" x2="1" y2="0"><stop offset="0" stop-color="#1f8ee2"/><stop offset=".5" stop-color="#2cc0c8"/><stop offset="1" stop-color="#66dd62"/></linearGradient><linearGradient id="eg2" x1="0" y1="0" x2="1" y2="1"><stop offset="0" stop-color="#2aa2ea"/><stop offset="1" stop-color="#0f58b0"/></linearGradient></defs><path d="M1.2 13 C.6 6 5.6 .8 12.4 .8 C19 .8 23.4 5 23.2 10.4 C23 14 20 16 16.6 16 C14.4 16 13.4 15 13.6 13.8 C13.9 12.4 14.8 11.8 14.6 10.4 C14.2 8.4 12.2 7.4 10 7.6 C5.8 8 2.4 10 1.2 13 Z" fill="url(#eg1)"/><path d="M1.2 13 C2.4 10 5.8 8 10 7.6 C7.6 9 6.6 11.6 7.2 14.4 C8.2 18.6 12 21.4 16.4 21.2 C18.6 21 20.4 20.2 21.8 19 C19.6 22 16.2 23.4 12.4 23.4 C6.2 23.4 1.6 19 1.2 13 Z" fill="url(#eg2)"/><path d="M10 7.6 C12.2 7.4 14.2 8.4 14.6 10.4 C13.2 9.4 10.6 9.8 9.6 11.8 C8.6 14 9.6 17 12.4 18.6 C15.4 20.2 19.4 19.8 21.8 19 C20.4 20.4 18.4 21.2 16.4 21.2 C12 21.4 8.2 18.6 7.2 14.4 C6.6 11.6 7.6 9 10 7.6 Z" fill="#0e4a9c"/></svg>
<div class="b " style="left:502.4px;top:405.9px;width:11.6px;height:1.8px;background:#3ea6ee;border-radius:1px"></div>
<div class="b " style="left:531.8px;top:394.6px;width:17.2px;height:9.4px;background:#f2f4f8;border-radius:1.6px 1.6px 2.4px 2.4px"></div>
<div class="b " style="left:536.4px;top:392.6px;width:8.0px;height:3.4px;border:1px solid #e8eaf0;border-bottom:0;border-radius:2px 2px 0 0"></div>
<div class="b " style="left:536.8px;top:396.4px;width:3.2px;height:2.2px;background:#f25022"></div>
<div class="b " style="left:540.8px;top:396.4px;width:3.2px;height:2.2px;background:#7fba00"></div>
<div class="b " style="left:536.8px;top:399.3px;width:3.2px;height:2.2px;background:#00a4ef"></div>
<div class="b " style="left:540.8px;top:399.3px;width:3.2px;height:2.2px;background:#ffb900"></div>
<div class="b " style="left:564px;top:392.4px;width:18px;height:11.6px;border-radius:50%;background:conic-gradient(from -60deg,#e8453c 0,#e8453c 33.3%,#f9bb2d 33.3%,#f9bb2d 66.6%,#34a453 66.6%,#34a453 100%)"></div>
<div class="b " style="left:569.2px;top:395.8px;width:7.6px;height:4.8px;background:#4a8af4;border-radius:50%;border:.9px solid #fff"></div>
<div class="b " style="left:573.6px;top:390.6px;width:11.4px;height:5.4px;background:#3a2a22;border-radius:50%"></div>
<div class="b " style="left:571.4px;top:406.7px;width:3.6px;height:0.9px;background:#9aa0aa;border-radius:1px"></div>
<svg style="left:596.8px;top:392.4px" width="17.6" height="11.6" viewBox="0 0 24 24" preserveAspectRatio="none"><path d="M17.6 .8 L23.2 3.4 V20.6 L17.6 23.2 L7.4 14.2 L3 17.6 L.8 16.4 V7.6 L3 6.4 L7.4 9.8 Z M17.4 7 L11 12 L17.4 17 Z M3.200000000000001 9.600000000000001 V14.4 L5.8 12 Z" fill="#2a9df0" fill-rule="evenodd"/></svg>
<div class="b " style="left:603.8px;top:406.7px;width:3.6px;height:0.9px;background:#9aa0aa;border-radius:1px"></div>
<div class="b " style="left:629px;top:392.6px;width:18px;height:9.8px;background:#2bb4f2;border-radius:50% 50% 45% 45%"></div>
<div class="b " style="left:633px;top:400px;width:4px;height:4.6px;background:#2bb4f2;border-radius:0 0 2px 2px"></div>
<div class="b " style="left:640.4px;top:400px;width:4.0px;height:4.4px;background:#239fe0;border-radius:0 0 2px 2px"></div>
<div class="b " style="left:636.2px;top:406.7px;width:3.6px;height:0.9px;background:#9aa0aa;border-radius:1px"></div>
<svg style="left:703.4px;top:395.6px" width="8.6" height="4.6" viewBox="0 0 8.6 4.6"><path d="M.6 4 L4.3 .8 L8 4" fill="none" stroke="#eef1f6" stroke-width="1"/></svg>
<div class="b " style="left:719.4px;top:395.6px;width:9.2px;height:5.0px;background:#e9edf2;border-radius:50% 50% 40% 40%"></div>
<div class="b " style="left:725.4px;top:398.2px;width:5.4px;height:4.2px;background:#2b8fe8;border-radius:50%"></div>
<svg style="left:740.4px;top:394.6px" width="12.4" height="7.2" viewBox="0 0 24 16" preserveAspectRatio="none"><path d="M12 15.4 L.6 4.8 C7 -1 17 -1 23.4 4.8 Z" fill="#eef1f6"/><path d="M3.4 6.6 C8.4 2.4 15.6 2.4 20.6 6.6 M6.6 9.6 C9.8 7 14.2 7 17.4 9.6" stroke="#1c2a3e" stroke-width="1.2" fill="none"/></svg>
<svg style="left:757.4px;top:394.4px" width="11.6" height="7.6" viewBox="0 0 23 16" preserveAspectRatio="none"><path d="M1 5.4 H4.6 L9.6 1.2 V14.8 L4.6 10.6 H1 Z" fill="none" stroke="#eef1f6" stroke-width="1.7" stroke-linejoin="round"/><path d="M13 5 Q15 8 13 11 M16 3 Q19.6 8 16 13" fill="none" stroke="#eef1f6" stroke-width="1.4" stroke-linecap="round"/><path d="M19.4 2 Q23.6 8 19.4 14" fill="none" stroke="#8a93a4" stroke-width="1.3" stroke-linecap="round"/></svg>
<div class="t r" style="left:787.4px;top:392px;font-size:6.8px;line-height:8.16px;font-weight:400;color:#f2f4f8;transform:scaleX(1.2351);">1:57 AM</div>
<div class="t r" style="left:782.2px;top:400px;font-size:6.8px;line-height:8.16px;font-weight:400;color:#f2f4f8;transform:scaleX(1.3601);">7/7/2025</div>
<svg style="left:825.4px;top:394.4px" width="10.4" height="8.4" viewBox="0 0 21 17" preserveAspectRatio="none"><path d="M12.6 1.2 C8 3.6 8.6 12.6 17.6 11.6 C15 16.6 4.6 17 2.4 10.4 C.8 5.2 6.4 -.2 12.6 1.2 Z" fill="none" stroke="#eef1f6" stroke-width="1.7" stroke-linejoin="round"/></svg>
</body></html>
